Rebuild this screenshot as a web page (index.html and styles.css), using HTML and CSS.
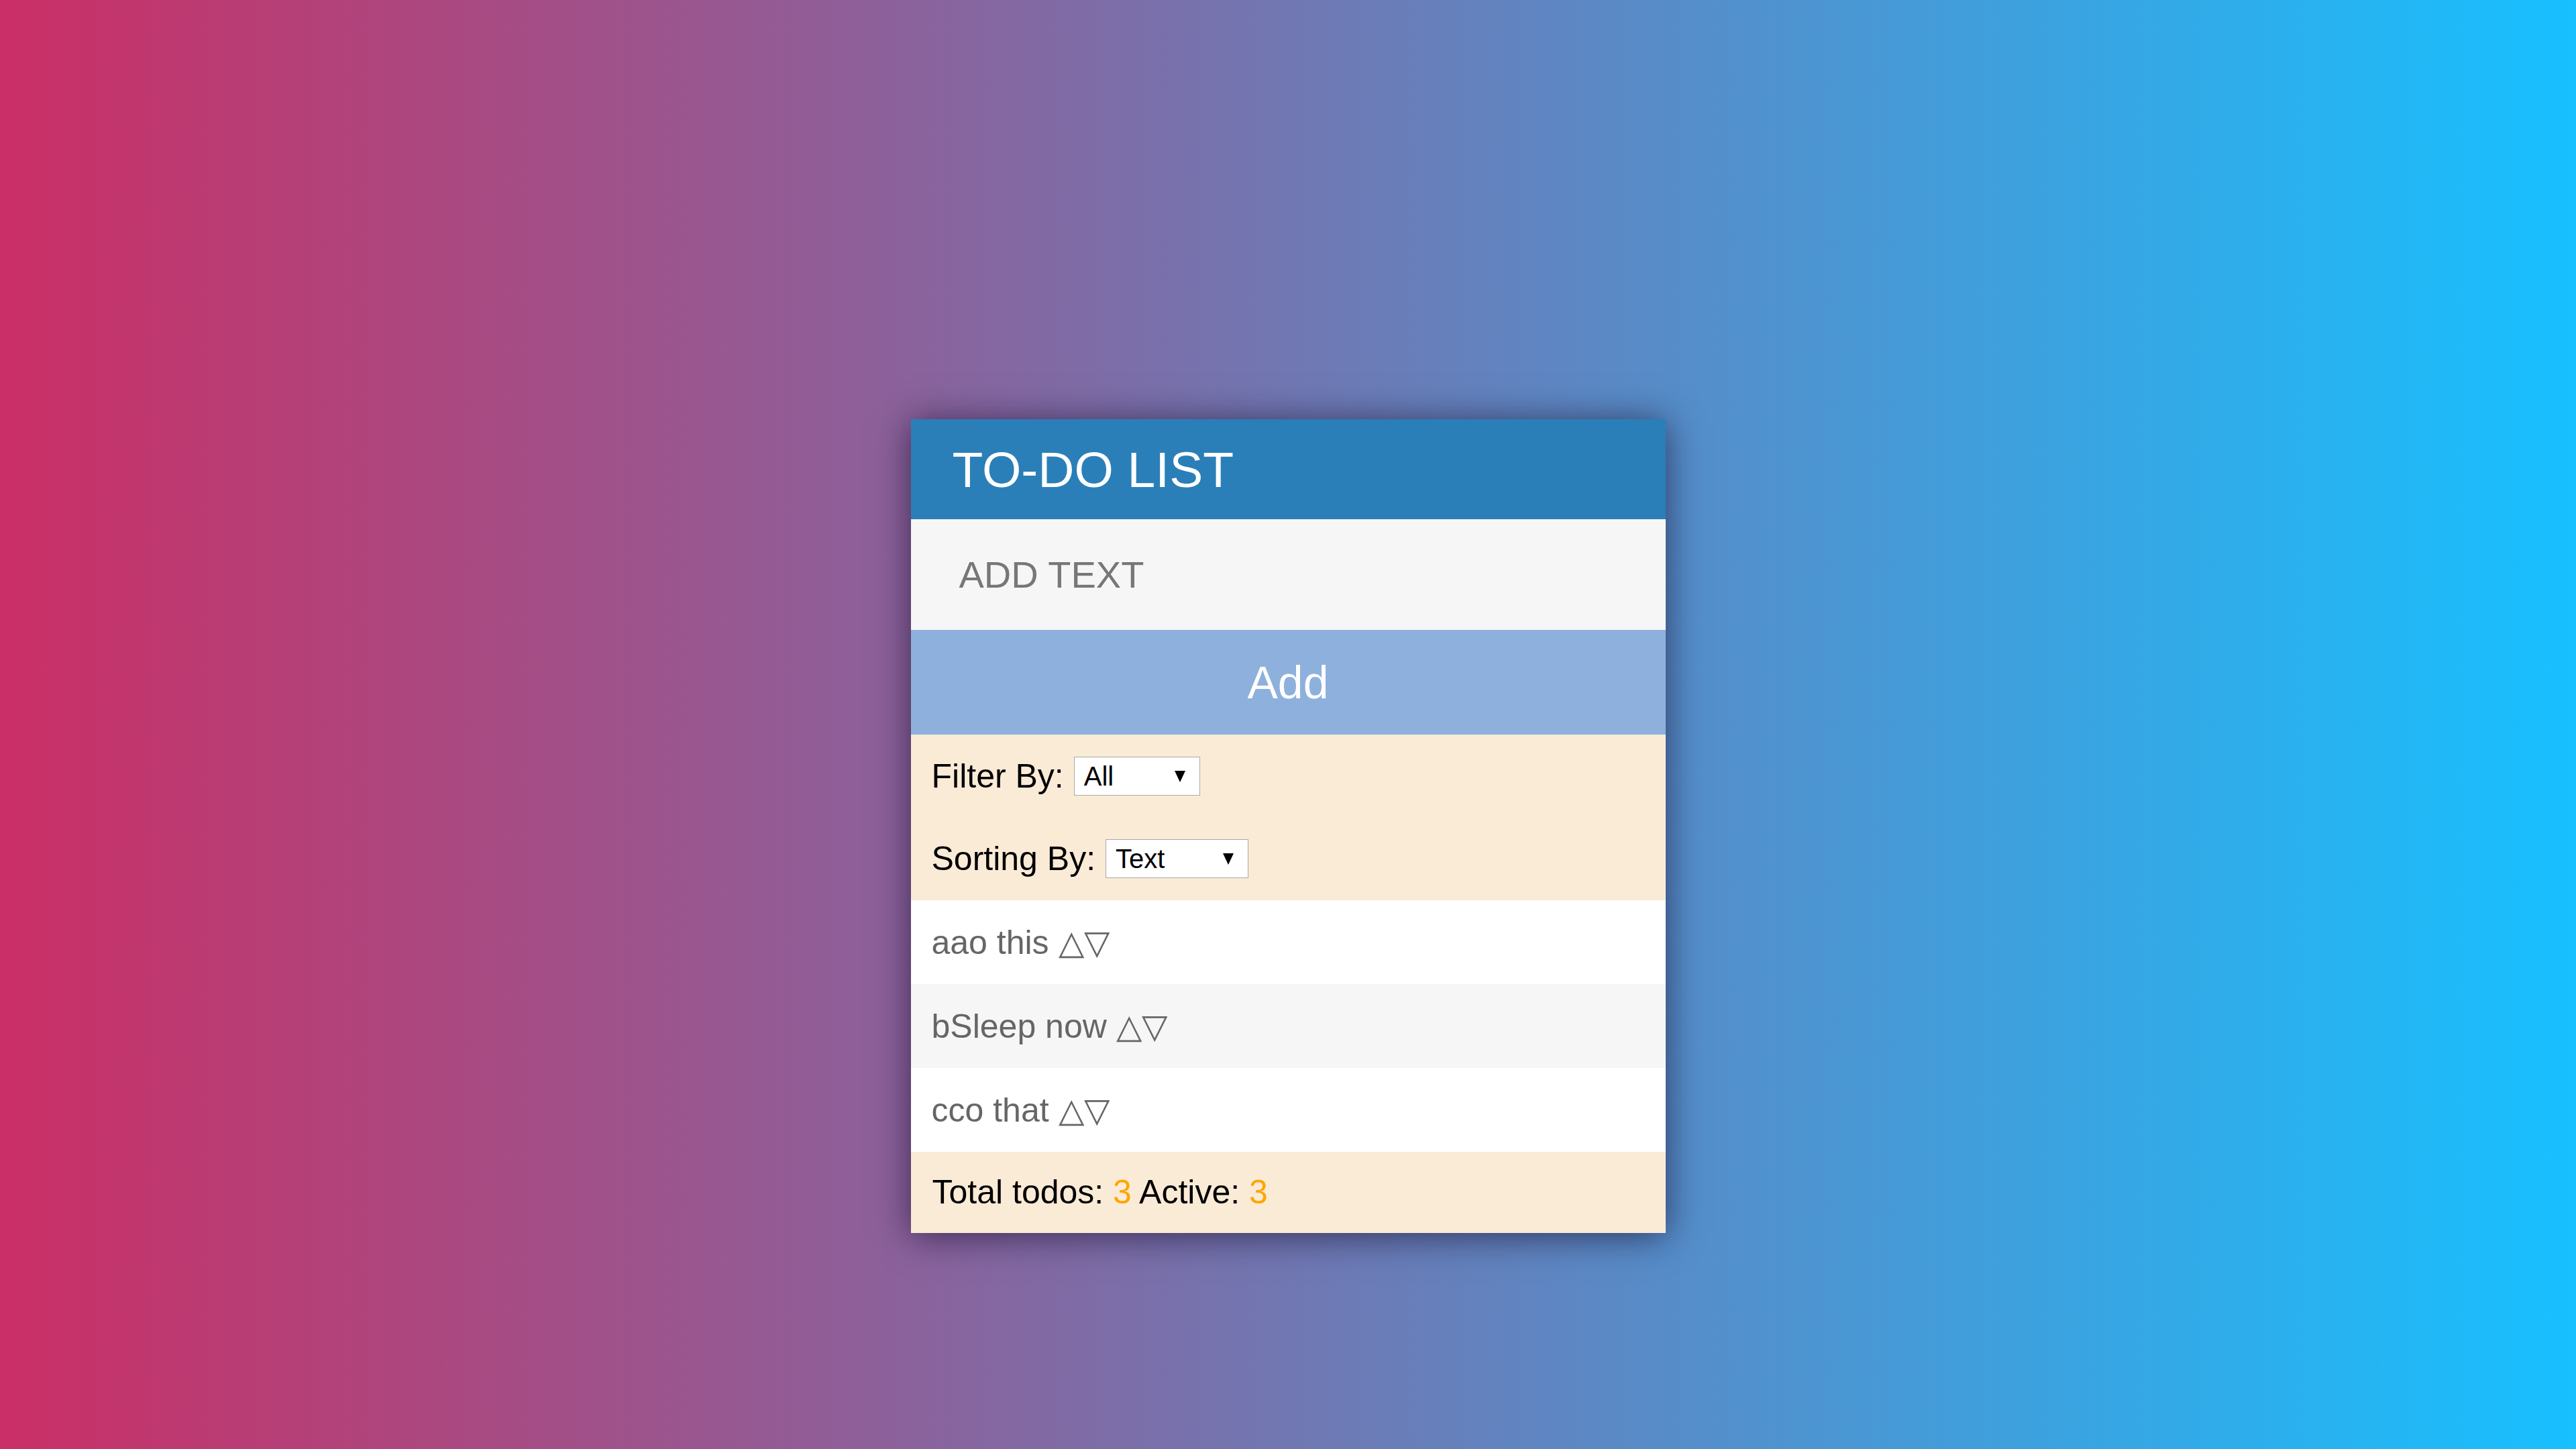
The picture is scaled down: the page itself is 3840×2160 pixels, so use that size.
FILE: index.html
```html
<!DOCTYPE html>
<html lang="en">
<head>
<meta charset="utf-8">
<title>To-Do List</title>
<link rel="stylesheet" href="styles.css">
</head>
<body>
<div class="page">
  <div class="todo">
    <h1 class="todo-title">TO-DO LIST</h1>
    <input class="todo-input" type="text" placeholder="ADD TEXT">
    <button class="todo-add" type="button">Add</button>
    <div class="todo-filters">
      <div class="filter-row">
        <label class="filter-label" for="filter">Filter By:</label>
        <span class="select-wrap">
          <select id="filter" class="select select-filter">
            <option>All</option>
            <option>Active</option>
            <option>Done</option>
          </select>
        </span>
      </div>
      <div class="filter-row">
        <label class="filter-label" for="sort">Sorting By:</label>
        <span class="select-wrap">
          <select id="sort" class="select select-sort">
            <option>Text</option>
            <option>Date</option>
          </select>
        </span>
      </div>
    </div>
    <ul class="todo-list">
      <li class="todo-item">aao this <span class="move">△</span><span class="move">▽</span></li>
      <li class="todo-item">bSleep now <span class="move">△</span><span class="move">▽</span></li>
      <li class="todo-item">cco that <span class="move">△</span><span class="move">▽</span></li>
    </ul>
    <div class="todo-footer">Total todos: <span class="count">3</span> Active: <span class="count">3</span></div>
  </div>
</div>
</body>
</html>
```

FILE: styles.css
```css
html, body {
  margin: 0;
  padding: 0;
}

body {
  min-height: 2160px;
  background: linear-gradient(to right, #ca2f66, #17c0ff);
  font-family: "Liberation Sans", Arial, sans-serif;
}

.page {
  padding-top: 625px;
}

.todo {
  width: 1125px;
  margin: 0 auto;
  box-shadow: 0 4px 50px rgba(20, 10, 40, 0.65);
  display: flex;
  flex-direction: column;
}

.todo-title {
  margin: 0;
  height: 149px;
  display: flex;
  align-items: center;
  padding-left: 62px;
  background: #2a7fb8;
  color: #fff;
  font-size: 75px;
  font-weight: normal;
}

.todo-input {
  box-sizing: border-box;
  width: 100%;
  height: 165px;
  margin: 0;
  padding: 0 72px;
  border: none;
  outline: none;
  background: #f6f6f6;
  font-family: "Liberation Sans", Arial, sans-serif;
  font-size: 56px;
  color: #333;
}

.todo-input::placeholder {
  color: #777;
}

.todo-add {
  width: 100%;
  height: 156px;
  margin: 0;
  padding: 0;
  border: none;
  background: #8eb0dc;
  color: #fff;
  font-family: "Liberation Sans", Arial, sans-serif;
  font-size: 68px;
}

.todo-filters {
  background: #faebd7;
}

.filter-row {
  height: 123.5px;
  display: flex;
  align-items: center;
  gap: 15px;
  padding-left: 31px;
  font-size: 50px;
  color: #000;
}

.select-wrap {
  position: relative;
  display: inline-block;
}

.select-wrap::after {
  content: "";
  position: absolute;
  right: 22px;
  top: 50%;
  margin-top: -8px;
  width: 0;
  height: 0;
  border-left: 8px solid transparent;
  border-right: 8px solid transparent;
  border-top: 17px solid #000;
  pointer-events: none;
}

.select {
  appearance: none;
  -webkit-appearance: none;
  box-sizing: border-box;
  height: 58px;
  margin: 0;
  padding: 0 14px;
  border: 1px solid #a9a9a9;
  border-radius: 0;
  background: #fff;
  color: #000;
  font-family: "Liberation Sans", Arial, sans-serif;
  font-size: 40px;
  display: block;
}

.select-filter {
  width: 188px;
}

.select-sort {
  width: 213px;
}

.todo-list {
  list-style: none;
  margin: 0;
  padding: 0;
}

.todo-item {
  height: 125px;
  display: flex;
  align-items: center;
  padding-left: 31px;
  font-size: 50px;
  color: #666;
  background: #fff;
  white-space: pre;
}

.todo-item:nth-child(even) {
  background: #f6f6f6;
}

.move {
  cursor: pointer;
}

.todo-footer {
  height: 121px;
  line-height: 121px;
  padding-left: 32px;
  background: #faebd7;
  font-size: 50px;
  color: #000;
}

.count {
  color: #ffa500;
}
```
